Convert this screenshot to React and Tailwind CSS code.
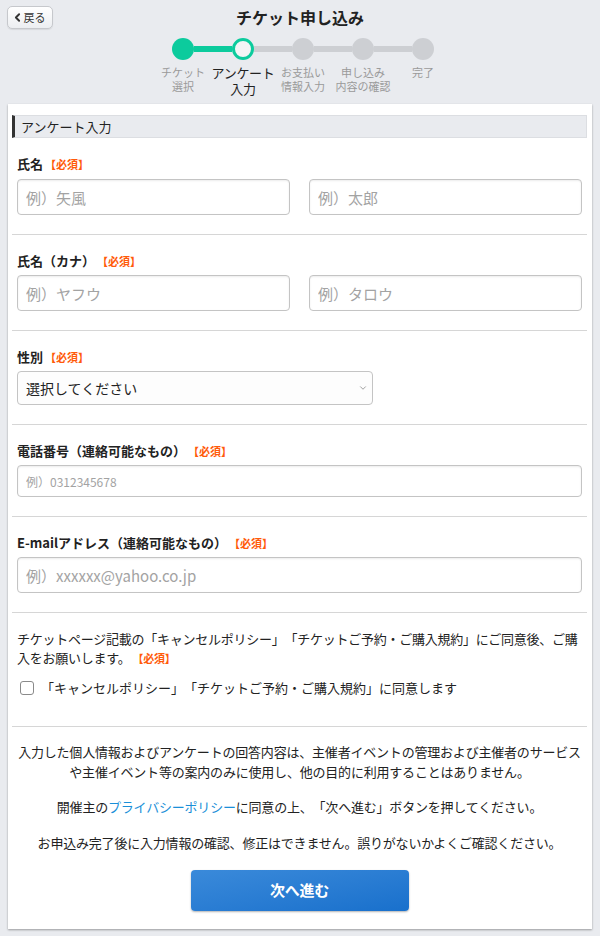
import { ChevronLeft, ChevronDown } from "lucide-react";

const font = { fontFamily: '"Noto Sans CJK JP", "Noto Sans", sans-serif' };

const steps = [
  { top: "チケット", bottom: "選択" },
  { top: "アンケート", bottom: "入力" },
  { top: "お支払い", bottom: "情報入力" },
  { top: "申し込み", bottom: "内容の確認" },
  { top: "完了", bottom: "" },
];

function Required() {
  return <span className="ml-0.5 text-[11px] font-bold text-[#ff5b0a]">【必須】</span>;
}

function Label({ children }) {
  return (
    <p className="flex items-center text-[13px] font-bold leading-[18px] text-[#222]">
      {children}
      <Required />
    </p>
  );
}

function Input({ placeholder, className = "", small }) {
  return (
    <input
      placeholder={placeholder}
      className={`rounded-[4px] border border-[#c4c4c4] bg-white px-2 shadow-[inset_0_1px_2px_rgba(0,0,0,0.08)] outline-none placeholder:text-[#a3a3a3] ${small ? "h-[32px] text-[12px]" : "h-[36px] text-[15px]"} ${className}`}
    />
  );
}

function Field({ children }) {
  return <div className="border-b border-[#d6d6d6] px-[5px] pb-[19px] pt-[17px]">{children}</div>;
}

function Stepper() {
  return (
    <div className="ml-[6px] flex justify-center">
      {steps.map((s, i) => {
        const leftColor = i === 0 ? "bg-transparent" : i === 1 ? "bg-[#0ccb9d]" : "bg-[#cdcfd3]";
        const rightColor = i === 4 ? "bg-transparent" : i === 0 ? "bg-[#0ccb9d]" : "bg-[#cdcfd3]";
        const active = i === 1;
        return (
          <div key={i} className="flex w-[60px] flex-col items-center">
            <div className="flex w-full items-center">
              <div className={`h-[6px] flex-1 ${leftColor}`} />
              <div
                className={`h-[22px] w-[22px] shrink-0 rounded-full ${
                  i === 0
                    ? "bg-[#0ccb9d]"
                    : active
                    ? "border-[3px] border-[#0ccb9d] bg-[#f3f4f5]"
                    : "bg-[#cdcfd3]"
                }`}
              />
              <div className={`h-[6px] flex-1 ${rightColor}`} />
            </div>
            <div
              className={`mt-[5px] whitespace-nowrap text-center ${
                active
                  ? "text-[13px] leading-[16px] tracking-[-0.3px] text-[#222]"
                  : "text-[11px] leading-[14px] text-[#9a9a9a]"
              }`}
            >
              <div>{s.top}</div>
              {s.bottom && <div>{s.bottom}</div>}
            </div>
          </div>
        );
      })}
    </div>
  );
}

export default function App() {
  return (
    <div className="min-h-[936px] bg-[#e9ebef] pb-2 [text-spacing-trim:space-all]" style={font}>
      <div className="relative pt-[6px]">
        <button className="absolute left-[7px] top-[6px] flex h-[23px] w-[46px] items-center justify-center rounded-[5px] border border-[#c6c8cc] bg-gradient-to-b from-white to-[#eceef1] text-[11px] text-[#333] shadow-[0_1px_1px_rgba(0,0,0,0.08)]">
          <ChevronLeft size={13} strokeWidth={3.5} className="-ml-1" />
          戻る
        </button>
        <h1 className="text-center text-[16px] font-bold leading-[23px] text-[#222]">チケット申し込み</h1>
        <div className="mt-[9px]">
          <Stepper />
        </div>
      </div>

      <div className="mx-[8px] mt-[7px] bg-white pb-[18px] pl-[4px] pr-[5px] pt-[11px] shadow-[0_1px_2px_rgba(0,0,0,0.35)]">
        <div className="flex h-[23px] items-center border border-l-[3px] border-[#dcdee2] border-l-[#333] bg-[#e9ebef] pl-[6px] text-[13px] text-[#222]">
          アンケート入力
        </div>

        <Field>
          <Label>氏名</Label>
          <div className="mt-[6px] flex gap-[19px]">
            <Input placeholder="例）矢風" className="w-[273px]" />
            <Input placeholder="例）太郎" className="w-[273px]" />
          </div>
        </Field>

        <Field>
          <Label>氏名（カナ）</Label>
          <div className="mt-[5px] flex gap-[19px]">
            <Input placeholder="例）ヤフウ" className="w-[273px]" />
            <Input placeholder="例）タロウ" className="w-[273px]" />
          </div>
        </Field>

        <Field>
          <Label>性別</Label>
          <div className="relative mt-[5px] flex h-[34px] w-[356px] items-center rounded-[4px] border border-[#c4c4c4] bg-[#fdfdfd] px-2 text-[14px] text-[#222]">
            選択してください
            <ChevronDown size={10} strokeWidth={1.5} className="absolute right-[4px] text-[#666]" />
          </div>
        </Field>

        <Field>
          <Label>電話番号（連絡可能なもの）</Label>
          <div className="mt-[5px]">
            <Input placeholder="例）0312345678" small className="w-full" />
          </div>
        </Field>

        <Field>
          <Label>E-mailアドレス（連絡可能なもの）</Label>
          <div className="mt-[5px]">
            <Input placeholder="例）xxxxxx@yahoo.co.jp" className="w-full" />
          </div>
        </Field>

        <div className="border-b border-[#d6d6d6] px-[5px] pb-[28px] pt-[16px]">
          <p className="text-[13px] leading-[19px] tracking-[-0.25px] text-[#222]">
            チケットページ記載の「キャンセルポリシー」「チケットご予約・ご購入規約」にご同意後、ご購入をお願いします。
            <Required />
          </p>
          <label className="mt-[10px] flex items-center gap-[7px] pl-[3px] text-[13px] text-[#222]">
            <span className="h-[14px] w-[14px] rounded-[3px] border border-[#8a8a8a] bg-white" />
            「キャンセルポリシー」「チケットご予約・ご購入規約」に同意します
          </label>
        </div>

        <div className="pt-[15px] text-center text-[13px] leading-[20px] tracking-[-0.2px] text-[#222]">
          <p>
            入力した個人情報およびアンケートの回答内容は、主催者イベントの管理および主催者のサービス
            <br />
            や主催イベント等の案内のみに使用し、他の目的に利用することはありません。
          </p>
          <p className="mt-[15px]">
            開催主の<span className="text-[#1a8fd8]">プライバシーポリシー</span>に同意の上、「次へ進む」ボタンを押してください。
          </p>
          <p className="mt-[16px]">お申込み完了後に入力情報の確認、修正はできません。誤りがないかよくご確認ください。</p>
          <button className="mx-auto mt-[17px] flex h-[41px] w-[218px] items-center justify-center rounded-[4px] bg-gradient-to-br from-[#3a8ada] to-[#1870cc] text-[15px] font-bold text-white shadow-[0_1px_2px_rgba(0,0,0,0.3)]">
            次へ進む
          </button>
        </div>
      </div>
    </div>
  );
}
